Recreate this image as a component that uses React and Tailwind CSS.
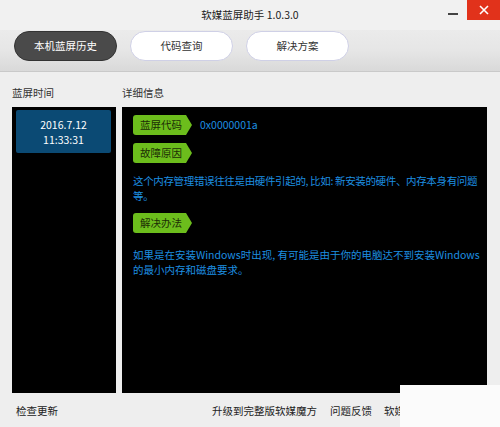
import React from "react";

const font = { fontFamily: '"Noto Sans CJK SC", "Noto Sans", sans-serif' };

function Tag({ children }) {
  return (
    <div className="flex items-center h-[20px]">
      <div className="h-[20px] bg-[#6cbd1c] rounded-l-[3px] pl-[7px] pr-[4px] flex items-center text-[10.5px] text-[#1c2e05] leading-none">
        {children}
      </div>
      <span className="w-0 h-0 border-y-[10px] border-y-transparent border-l-[6px] border-l-[#6cbd1c]" />
    </div>
  );
}

export default function App() {
  return (
    <div className="relative w-[500px] h-[427px] bg-[#eeeeee] flex flex-col overflow-hidden" style={font}>
      {/* title bar */}
      <div className="relative h-[30px] bg-[#f1f1f1] flex items-center justify-center">
        <span className="text-[10.5px] text-[#222] pb-[1px]">软媒蓝屏助手 1.0.3.0</span>
        <div className="absolute right-0 top-0 flex items-start">
          <div className="w-[10px] h-[2px] bg-[#444] mt-[13px] mr-[9px]" />
          <div className="w-[33px] h-[20px] bg-[#e1321b] flex items-center justify-center">
            <svg width="10" height="10" viewBox="0 0 10 10">
              <path d="M1 1 L9 9 M9 1 L1 9" stroke="#fff" strokeWidth="1.6" />
            </svg>
          </div>
        </div>
      </div>

      {/* tabs */}
      <div className="h-[42px] bg-gradient-to-b from-[#ebebeb] via-[#e6e6e6] to-[#d9d9d9] flex items-start pt-[1px] pl-[14px] gap-[13px] border-b border-[#c9c9c9]">
        <div className="w-[103px] h-[30px] rounded-full bg-[#4a4a4a] border border-[#333] flex items-center justify-center text-[10.5px] text-white">
          本机蓝屏历史
        </div>
        <div className="w-[103px] h-[30px] rounded-full bg-white border border-[#cfd0e6] flex items-center justify-center text-[10.5px] text-[#333]">
          代码查询
        </div>
        <div className="w-[103px] h-[30px] rounded-full bg-white border border-[#cfd0e6] flex items-center justify-center text-[10.5px] text-[#333]">
          解决方案
        </div>
      </div>

      {/* content */}
      <div className="flex-1 flex flex-col px-[12px]">
        <div className="flex h-[35px] items-end pb-[9px] text-[10.5px] text-[#333] leading-none">
          <span className="w-[110px]">蓝屏时间</span>
          <span>详细信息</span>
        </div>
        <div className="flex gap-[6px] h-[286px]">
          <div className="w-[104px] bg-black pt-[3px] px-[4px]">
            <div className="h-[43px] w-[95px] rounded-[2px] bg-[#0b4a74] flex flex-col items-center justify-center text-[10.5px] text-white leading-[15px]">
              <span>2016.7.12</span>
              <span>11:33:31</span>
            </div>
          </div>
          <div className="w-[365px] bg-black pl-[11px] pr-[2px] pt-[8px] flex flex-col text-[10.5px] text-[#1d8fe1]">
            <div className="flex items-center gap-[8px]">
              <Tag>蓝屏代码</Tag>
              <span>0x0000001a</span>
            </div>
            <div className="mt-[8px]">
              <Tag>故障原因</Tag>
            </div>
            <p className="mt-[10px] leading-[15px] tracking-[-0.35px]">
              这个内存管理错误往往是由硬件引起的, 比如: 新安装的硬件、内存本身有问题等。
            </p>
            <div className="mt-[10px]">
              <Tag>解决办法</Tag>
            </div>
            <p className="mt-[14px] leading-[15px]">
              如果是在安装Windows时出现, 有可能是由于你的电脑达不到安装Windows的最小内存和磁盘要求。
            </p>
          </div>
        </div>
        <div className="flex-1 flex items-center text-[10.5px] text-[#222] pl-[4px] pt-[2px]">
          <span>检查更新</span>
          <span className="ml-[154px]">升级到完整版软媒魔方</span>
          <span className="ml-[13px]">问题反馈</span>
          <span className="ml-[12px]">软媒魔方</span>
        </div>
      </div>

      <div className="absolute left-[400px] top-[385px] w-[100px] h-[42px] bg-[#fbfbfb]" />
    </div>
  );
}
